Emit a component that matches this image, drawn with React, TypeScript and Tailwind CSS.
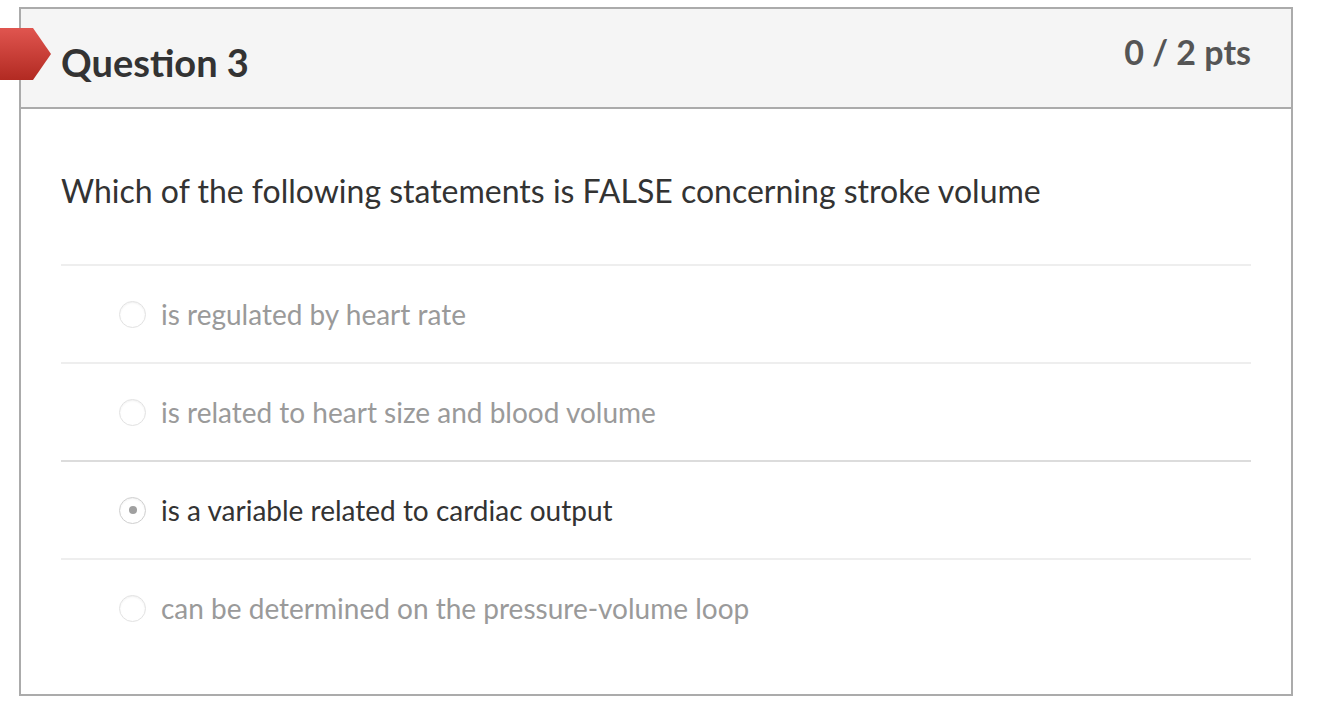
import React from "react";

interface Answer {
  text: string;
  selected?: boolean;
}

const answers: Answer[] = [
  { text: "is regulated by heart rate" },
  { text: "is related to heart size and blood volume" },
  { text: "is a variable related to cardiac output", selected: true },
  { text: "can be determined on the pressure-volume loop" },
];

const Radio = ({ checked }: { checked?: boolean }) => (
  <span
    className={`flex items-center justify-center w-[27px] h-[27px] rounded-full bg-white border shadow-[inset_0_1px_2px_rgba(0,0,0,0.06)] ${
      checked ? "border-[#cfcfcf]" : "border-[#e2e2e2]"
    }`}
  >
    {checked ? <span className="w-[8px] h-[8px] rounded-full bg-[#a0a0a0]" /> : null}
  </span>
);

const App = () => {
  return (
    <div
      className="relative w-[1320px] h-[710px] bg-white pt-[7px] pl-[19px]"
      style={{ fontFamily: "Lato, 'Open Sans', sans-serif" }}
    >
      {/* incorrect-answer flag hanging over the card edge */}
      <svg
        className="absolute left-0 top-[27px]"
        width="52"
        height="54"
        viewBox="0 0 52 54"
      >
        <defs>
          <linearGradient id="flag" x1="0" y1="0" x2="0" y2="1">
            <stop offset="0" stopColor="#e0554f" />
            <stop offset="1" stopColor="#b22a22" />
          </linearGradient>
        </defs>
        <polygon points="0,1 33,1 51,27 33,53 0,53" fill="url(#flag)" />
      </svg>

      <div className="w-[1274px] h-[689px] border-2 border-[#ababab]">
        <div className="flex justify-between h-[100px] bg-[#f5f5f5] border-b-2 border-[#ababab] px-[40px]">
          <h2 className="mt-[34px] text-[38px] leading-none font-bold text-[#333]">
            Question 3
          </h2>
          <span className="mt-[26px] text-[34px] leading-none font-bold text-[#555]">
            0 / 2 pts
          </span>
        </div>

        <div className="px-[40px] pb-[38px]">
          <p className="h-[155px] pt-[62px] text-[32px] leading-[40px] text-[#333]">
            Which of the following statements is FALSE concerning stroke volume
          </p>
          {answers.map((a) => (
            <div
              key={a.text}
              className={`flex items-center h-[98px] border-t-2 pl-[58px] ${
                a.selected ? "border-[#dcdcdc]" : "border-[#eeeeee]"
              }`}
            >
              <Radio checked={a.selected} />
              <span
                className={`ml-[15px] text-[28px] leading-none ${
                  a.selected ? "text-[#333]" : "text-[#9a9a9a]"
                }`}
              >
                {a.text}
              </span>
            </div>
          ))}
        </div>
      </div>
    </div>
  );
};

export default App;
